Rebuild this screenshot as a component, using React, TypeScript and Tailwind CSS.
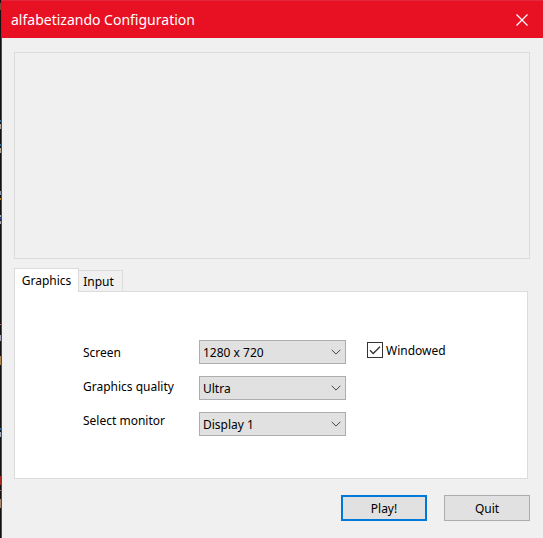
import { useState } from "react";

const EDGE_MARKS = [
  { y: 3, h: 7, color: "#7a4a35" },
  { y: 120, h: 2, color: "#2f6fa8" },
  { y: 124, h: 5, color: "#a9a39b" },
  { y: 144, h: 2, color: "#2f6fa8" },
  { y: 148, h: 5, color: "#b0a48f" },
  { y: 191, h: 4, color: "#8d93ad" },
  { y: 198, h: 2, color: "#b07a1c" },
  { y: 215, h: 2, color: "#a9a9a9" },
  { y: 217, h: 3, color: "#23408a" },
  { y: 221, h: 3, color: "#a9a9a9" },
  { y: 324, h: 1, color: "#b5735a" },
  { y: 335, h: 6, color: "#a79db5" },
  { y: 356, h: 9, color: "#b08550" },
  { y: 428, h: 2, color: "#2f6fa8" },
  { y: 432, h: 5, color: "#9fa9b5" },
  { y: 476, h: 9, color: "#a5261d" },
  { y: 490, h: 1, color: "#b5735a" },
  { y: 499, h: 9, color: "#a9866a" },
];

const FIELDS = [
  { id: "screen", label: "Screen", options: ["1280 x 720", "1920 x 1080"] },
  { id: "quality", label: "Graphics quality", options: ["Ultra", "High", "Low"] },
  { id: "monitor", label: "Select monitor", options: ["Display 1"] },
];

function SelectBox({ id, options }: { id: string; options: string[] }) {
  return (
    <div className="relative">
      <select
        id={id}
        className="block h-6 w-full appearance-none border border-[#adadad] bg-[#e1e1e1] pl-[3px] pr-6 pt-0.5 text-xs text-black outline-none"
      >
        {options.map((option) => (
          <option key={option}>{option}</option>
        ))}
      </select>
      <svg
        className="pointer-events-none absolute right-1 top-2 h-2 w-3"
        viewBox="0 0 12 8"
        fill="none"
        stroke="#444"
        aria-hidden="true"
      >
        <path d="M1.7 1.8 L6 6.1 L10.3 1.8" />
      </svg>
    </div>
  );
}

export default function App() {
  const [windowed, setWindowed] = useState(true);
  return (
    <div className="relative flex min-h-screen bg-[#111] pl-px font-['Noto_Sans',sans-serif] text-xs text-black">
      <svg className="absolute left-0 top-0 h-full w-px" aria-hidden="true">
        {EDGE_MARKS.map((mark) => (
          <rect key={mark.y} x="0" y={mark.y} width="1" height={mark.h} fill={mark.color} />
        ))}
      </svg>
      <main className="flex min-w-0 flex-1 flex-col border-l border-[#d01522] bg-[#f0f0f0]">
        <header className="flex h-[38px] items-center justify-between border-t border-[#e3283a] bg-[#e81123] pl-[9px] pr-[14px] text-white">
          <h1 className="text-sm">alfabetizando Configuration</h1>
          <button type="button" aria-label="Close" className="block">
            <svg className="block h-[14px] w-[14px]" viewBox="0 0 14 14" fill="none" stroke="white" strokeWidth="1.2">
              <path d="M1.5 1.5 L12.5 12.5 M12.5 1.5 L1.5 12.5" />
            </svg>
          </button>
        </header>

        <div className="flex flex-col pl-3 pr-[13px] pt-[14px]">
          <div className="h-[207px] border border-[#dcdcdc]" />

          <div className="mr-[2px] mt-[9px] flex flex-col">
            <div role="tablist" className="z-10 -mb-px flex items-end">
              <button
                type="button"
                role="tab"
                aria-selected="true"
                className="h-6 w-[65px] border border-b-0 border-[#dcdcdc] bg-white"
              >
                Graphics
              </button>
              <button
                type="button"
                role="tab"
                aria-selected="false"
                className="h-[22px] w-11 border border-l-0 border-[#dcdcdc] pr-1 pt-0.5"
              >
                Input
              </button>
            </div>

            <div role="tabpanel" className="flex h-[188px] items-start border border-[#dcdcdc] bg-white pl-[68px] pt-12">
              <div className="flex w-[116px] flex-col gap-[10px] pt-px">
                {FIELDS.map((field) => (
                  <label key={field.id} htmlFor={field.id} className="h-6 leading-6">
                    {field.label}
                  </label>
                ))}
              </div>
              <div className="flex w-[147px] flex-col gap-3">
                {FIELDS.map((field) => (
                  <SelectBox key={field.id} id={field.id} options={field.options} />
                ))}
              </div>
              <label className="ml-[21px] flex h-5 items-center gap-[3px]">
                <span className="grid">
                  <input
                    type="checkbox"
                    checked={windowed}
                    onChange={(event) => setWindowed(event.target.checked)}
                    className="peer col-start-1 row-start-1 h-4 w-4 appearance-none border border-[#333] bg-white"
                  />
                  <svg
                    className="pointer-events-none invisible col-start-1 row-start-1 h-4 w-4 peer-checked:visible"
                    viewBox="0 0 16 16"
                    fill="none"
                    stroke="#333"
                    strokeWidth="1.3"
                    aria-hidden="true"
                  >
                    <path d="M3 8.3 L6.2 11.5 L13 4.7" />
                  </svg>
                </span>
                <span className="pt-0.5">Windowed</span>
              </label>
            </div>
          </div>

          <div className="flex justify-end gap-[17px] pt-4">
            <button type="button" className="h-[26px] w-[86px] border-2 border-[#0078d7] bg-[#e1e1e1] pt-0.5">
              Play!
            </button>
            <button type="button" className="h-[26px] w-[86px] border border-[#adadad] bg-[#e1e1e1] pt-0.5">
              Quit
            </button>
          </div>
        </div>
      </main>
    </div>
  );
}
